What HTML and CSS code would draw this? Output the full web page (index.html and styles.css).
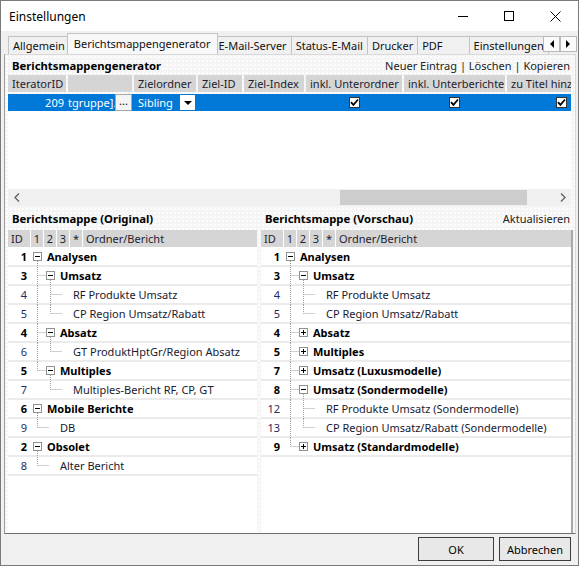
FILE: index.html
```html
<!DOCTYPE html>
<html lang="de">
  <head>
    <meta charset="UTF-8" />
    <title>Einstellungen</title>
    <link rel="stylesheet" href="styles.css">
  </head>
  <body>
    <div class="window">
      <div class="titlebar">
        <span class="title">Einstellungen</span>
        <div class="controls">
          <div class="ctl">
            <svg width="10" height="10"><path d="M0 5.5H10" stroke="#000" /></svg>
          </div>
          <div class="ctl">
            <svg width="10" height="10"><rect x="0.5" y="0.5" width="9" height="9" fill="none" stroke="#000" /></svg>
          </div>
          <div class="ctl">
            <svg width="11" height="11"><path d="M0.5 0.5L10.5 10.5M10.5 0.5L0.5 10.5" stroke="#000" /></svg>
          </div>
        </div>
      </div>

      <div class="tabs">
        <div class="tab">Allgemein</div>
        <div class="tab active">Berichtsmappengenerator</div>
        <div class="tab">E-Mail-Server</div>
        <div class="tab">Status-E-Mail</div>
        <div class="tab">Drucker</div>
        <div class="tab tab-pdf">PDF</div>
        <div class="tab">Einstellungen</div>
        <!-- tab scroll buttons sit over the last tab -->
        <div class="tab-scroll">
          <div class="tab-arrow">
            <svg width="5" height="8"><path d="M5 0V8L1 4Z" fill="#000" /></svg>
          </div>
          <div class="tab-arrow">
            <svg width="5" height="8"><path d="M0 0V8L4 4Z" fill="#000" /></svg>
          </div>
        </div>
      </div>

      <div class="panel">
        <div class="section-head">
          <b>Berichtsmappengenerator</b>
          <span class="links">Neuer Eintrag | Löschen | Kopieren</span>
        </div>

        <div class="grid">
          <div class="grid-head">
            <div class="cell c-iter">IteratorID</div>
            <div class="cell c-path"></div>
            <div class="cell c-ziel">Zielordner</div>
            <div class="cell c-zid">Ziel-ID</div>
            <div class="cell c-zidx">Ziel-Index</div>
            <div class="cell c-uo">inkl. Unterordner</div>
            <div class="cell c-ub">inkl. Unterberichte</div>
            <div class="cell c-tit">zu Titel hinzufügen</div>
          </div>
          <div class="grid-row">
            <div class="cell c-iter num">209</div>
            <div class="cell c-path">
              <span class="clip">tgruppe].8</span>
              <span class="dots">...</span>
            </div>
            <div class="cell c-ziel">
              <span class="clip pad">Sibling</span>
              <span class="drop">
                <svg width="8" height="4"><path d="M0 0H8L4 4Z" fill="#000" /></svg>
              </span>
            </div>
            <div class="cell c-zid"></div>
            <div class="cell c-zidx"></div>
            <div class="cell c-uo center"><span class="check"></span></div>
            <div class="cell c-ub center"><span class="check"></span></div>
            <div class="cell c-tit center"><span class="check"></span></div>
          </div>
          <div class="grid-blank"></div>
          <div class="hscroll">
            <div class="sbtn">
              <svg width="6" height="9"><path d="M5 0.5L1 4.5L5 8.5" fill="none" stroke="#606060" stroke-width="1.3" /></svg>
            </div>
            <div class="track"><div class="thumb"></div></div>
            <div class="sbtn">
              <svg width="6" height="9"><path d="M1 0.5L5 4.5L1 8.5" fill="none" stroke="#606060" stroke-width="1.3" /></svg>
            </div>
          </div>
        </div>

        <div class="panes">
          <div class="pane pane-left">
            <div class="pane-head"><b>Berichtsmappe (Original)</b></div>
            <div class="tree" id="tree-original">
              <div class="tree-head">
                <div class="cell h-id">ID</div>
                <div class="cell h-n">1</div>
                <div class="cell h-n">2</div>
                <div class="cell h-n">3</div>
                <div class="cell h-n">*</div>
                <div class="cell h-name">Ordner/Bericht</div>
              </div>
            </div>
          </div>
          <div class="pane pane-right">
            <div class="pane-head">
              <b>Berichtsmappe (Vorschau)</b>
              <span class="links">Aktualisieren</span>
            </div>
            <div class="tree tree-bordered" id="tree-preview">
              <div class="tree-head">
                <div class="cell h-id">ID</div>
                <div class="cell h-n">1</div>
                <div class="cell h-n">2</div>
                <div class="cell h-n">3</div>
                <div class="cell h-n">*</div>
                <div class="cell h-name">Ordner/Bericht</div>
              </div>
            </div>
          </div>
        </div>
      </div>

      <div class="footer">
        <button class="btn btn-ok">OK</button>
        <button class="btn btn-cancel">Abbrechen</button>
      </div>
    </div>

    <script>
      // [id, level, kind, text]  kind: o = open folder, c = closed folder, r = report
      const original = [
        [1, 0, 'o', 'Analysen'],
        [3, 1, 'o', 'Umsatz'],
        [4, 2, 'r', 'RF Produkte Umsatz'],
        [5, 2, 'r', 'CP Region Umsatz/Rabatt'],
        [4, 1, 'o', 'Absatz'],
        [6, 2, 'r', 'GT ProduktHptGr/Region Absatz'],
        [5, 1, 'o', 'Multiples'],
        [7, 2, 'r', 'Multiples-Bericht RF, CP, GT'],
        [6, 0, 'o', 'Mobile Berichte'],
        [9, 1, 'r', 'DB'],
        [2, 0, 'o', 'Obsolet'],
        [8, 1, 'r', 'Alter Bericht'],
      ];

      const preview = [
        [1, 0, 'o', 'Analysen'],
        [3, 1, 'o', 'Umsatz'],
        [4, 2, 'r', 'RF Produkte Umsatz'],
        [5, 2, 'r', 'CP Region Umsatz/Rabatt'],
        [4, 1, 'c', 'Absatz'],
        [5, 1, 'c', 'Multiples'],
        [7, 1, 'c', 'Umsatz (Luxusmodelle)'],
        [8, 1, 'o', 'Umsatz (Sondermodelle)'],
        [12, 2, 'r', 'RF Produkte Umsatz (Sondermodelle)'],
        [13, 2, 'r', 'CP Region Umsatz/Rabatt (Sondermodelle)'],
        [9, 1, 'c', 'Umsatz (Standardmodelle)'],
      ];

      // does the item at index i have a later sibling?
      function hasNext(rows, i) {
        const level = rows[i][1];
        for (let j = i + 1; j < rows.length; j++) {
          if (rows[j][1] < level) return false;
          if (rows[j][1] === level) return true;
        }
        return false;
      }

      function ancestorIndex(rows, i, level) {
        for (let j = i - 1; j >= 0; j--) {
          if (rows[j][1] === level) return j;
        }
        return -1;
      }

      const cx = (k) => 7.5 + 13 * k;

      function gutter(rows, i) {
        const [, level, kind] = rows[i];
        const w = 13 * (level + 1) + 4;
        let dotted = '';
        let solid = '';

        for (let k = 1; k < level; k++) {
          if (hasNext(rows, ancestorIndex(rows, i, k))) {
            dotted += `M${cx(k - 1)} 0V19`;
          }
        }
        if (level > 0) {
          dotted += `M${cx(level - 1)} 0V${hasNext(rows, i) ? 19 : 8.5}`;
          const end = kind === 'r' ? cx(level) - 1 : cx(level) - 4;
          dotted += `M${cx(level - 1)} 8.5H${end}`;
        }
        if (kind === 'o' && rows[i + 1] && rows[i + 1][1] > level) {
          dotted += `M${cx(level)} 13V19`;
        }
        if (kind !== 'r') {
          const c = cx(level);
          solid += `<rect x="${c - 4}" y="4.5" width="8" height="8" fill="#fff" stroke="#919191" />`;
          let sign = `M${c - 2.5} 8.5H${c + 2.5}`;
          if (kind === 'c') sign += `M${c} 6V11`;
          solid += `<path d="${sign}" stroke="#000" />`;
        }

        return `<svg width="${w}" height="19"><path d="${dotted}" fill="none" stroke="#a0a0a0" stroke-dasharray="1 1" />${solid}</svg>`;
      }

      function renderTree(el, rows) {
        rows.forEach((row, i) => {
          const div = document.createElement('div');
          div.className = 'tree-row' + (row[2] === 'r' ? ' report' : ' folder');
          div.innerHTML =
            `<span class="tid">${row[0]}</span>` +
            gutter(rows, i) +
            `<span class="tlabel">${row[3]}</span>`;
          el.appendChild(div);
        });
      }

      renderTree(document.getElementById('tree-original'), original);
      renderTree(document.getElementById('tree-preview'), preview);
    </script>
  </body>
</html>
```

FILE: styles.css
```css
* {
  margin: 0;
  padding: 0;
  box-sizing: border-box;
}

body {
  font-family: 'Noto Sans', 'Liberation Sans', sans-serif;
  font-size: 11px;
  color: #111;
  background: #fff;
  width: 579px;
  height: 566px;
  overflow: hidden;
}

.window {
  width: 579px;
  height: 566px;
  border: 1px solid #7a7a7a;
  background: #f0f0f0;
  display: flex;
  flex-direction: column;
}

/* title bar */

.titlebar {
  height: 30px;
  flex: none;
  background: #fff;
  display: flex;
  align-items: center;
  padding-left: 8px;
}

.title {
  flex: 1;
  font-size: 12px;
  color: #000;
}

.controls {
  display: flex;
}

.ctl {
  width: 46px;
  height: 30px;
  display: flex;
  align-items: center;
  justify-content: center;
}

.ctl svg {
  display: block;
}

/* tabs */

.tabs {
  height: 23px;
  flex: none;
  display: flex;
  align-items: flex-end;
  padding-left: 8px;
  position: relative;
  overflow: hidden;
}

.tab {
  height: 18px;
  line-height: 17px;
  padding: 0 4px;
  border: 1px solid #c3c3c3;
  border-bottom: none;
  margin-left: -1px;
  background: #f0f0f0;
  white-space: nowrap;
  flex: none;
}

.tab.active {
  height: 22px;
  line-height: 20px;
  padding: 0 6px;
  margin: 0 -3px -1px -3px;
  background: #f8f8f8;
  position: relative;
  z-index: 1;
}

.tab-pdf {
  padding-right: 26px;
}

.tab-scroll {
  position: absolute;
  right: 1px;
  top: 5px;
  display: flex;
  z-index: 2;
}

.tab-arrow {
  width: 17px;
  height: 16px;
  border: 1px solid #b8b8b8;
  background: #fafafa;
  display: flex;
  align-items: center;
  justify-content: center;
}

.tab-arrow svg {
  display: block;
}

/* panel */

.panel {
  flex: 1;
  margin: 0 2px 0 3px;
  border: 1px solid #d9d9d9;
  border-left-color: #9a9a9a;
  border-bottom-color: #6e6e6e;
  padding: 0 2px 0 3px;
  background-color: #f5f5f5;
  background-image: radial-gradient(circle, #fdfdfd 0.7px, transparent 0.9px);
  background-size: 4px 4px;
  display: flex;
  flex-direction: column;
}

.section-head {
  height: 20px;
  flex: none;
  display: flex;
  align-items: center;
  justify-content: space-between;
  padding: 0 3px 0 4px;
  white-space: nowrap;
}

.section-head b,
.pane-head b {
  font-weight: 700;
  font-size: 11.3px;
  color: #000;
}

.links {
  color: #222;
}

/* grid */

.grid {
  width: 563px;
  flex: none;
  display: flex;
  flex-direction: column;
}

.grid-head,
.grid-row {
  height: 17px;
  display: flex;
  gap: 2px;
  overflow: hidden;
  line-height: 17px;
  white-space: nowrap;
}

.grid-head .cell {
  background: #d5d5d5;
  padding-left: 4px;
  color: #1d1d2e;
}

.grid-row {
  margin-top: 2px;
  background: #0078d7;
  color: #fff;
}

.cell {
  flex: none;
  overflow: hidden;
}

.grid-row .cell {
  display: flex;
  align-items: center;
}

.c-iter { width: 58px; }
.c-path { width: 64px; }
.c-ziel { width: 62px; }
.c-zid { width: 44px; }
.c-zidx { width: 60px; }
.c-uo { width: 96px; }
.c-ub { width: 101px; }
.c-tit { width: 108px; }

.num {
  justify-content: flex-end;
  padding-right: 2px;
}

.center {
  justify-content: center;
}

.clip {
  flex: 1;
  overflow: hidden;
  white-space: nowrap;
}

.pad {
  padding-left: 4px;
}

.dots {
  width: 17px;
  height: 17px;
  flex: none;
  background: #f4f4f4;
  border: 1px solid #a8a8a8;
  color: #111;
  text-align: center;
  line-height: 12px;
}

.drop {
  width: 15px;
  height: 15px;
  flex: none;
  margin-right: 1px;
  background: #fff;
  display: flex;
  align-items: center;
  justify-content: center;
}

.drop svg {
  display: block;
}

.check {
  width: 11px;
  height: 11px;
  border: 1px solid #333;
  background: #fff url("data:image/svg+xml,%3Csvg xmlns='http://www.w3.org/2000/svg' width='9' height='9'%3E%3Cpath d='M1 4.2L3.4 6.8L8 1.5' fill='none' stroke='%23000' stroke-width='1.8'/%3E%3C/svg%3E") no-repeat center;
}

.grid-blank {
  height: 78px;
  background: #fff;
}

.hscroll {
  height: 17px;
  background: #f0f0f0;
  display: flex;
  align-items: center;
}

.sbtn {
  width: 17px;
  height: 17px;
  display: flex;
  align-items: center;
  justify-content: center;
}

.sbtn svg {
  display: block;
}

.track {
  flex: 1;
  height: 17px;
  display: flex;
  align-items: center;
}

.thumb {
  margin-left: 315px;
  width: 187px;
  height: 15px;
  background: #cdcdcd;
}

/* trees */

.panes {
  flex: 1;
  display: flex;
  gap: 4px;
  min-height: 0;
}

.pane {
  display: flex;
  flex-direction: column;
}

.pane-left {
  width: 249px;
}

.pane-right {
  flex: 1;
}

.pane-head {
  height: 24px;
  flex: none;
  display: flex;
  align-items: center;
  justify-content: space-between;
  padding: 0 3px 0 4px;
  white-space: nowrap;
}

.tree {
  flex: 1;
  background: #fff;
  display: flex;
  flex-direction: column;
  overflow: hidden;
}

.tree-bordered {
  border-right: 2px solid #a9a9a9;
}

.tree-head {
  height: 18px;
  flex: none;
  display: flex;
  gap: 1px;
  padding-bottom: 1px;
  line-height: 17px;
}

.tree-head .cell {
  background: #d5d5d5;
  color: #1d1d2e;
}

.h-id {
  width: 22px;
  padding-left: 3px;
}

.h-n {
  width: 12px;
  text-align: center;
}

.h-name {
  flex: 1;
  padding-left: 3px;
}

.tree-row {
  height: 19px;
  flex: none;
  display: flex;
  align-items: flex-start;
  background: linear-gradient(#fff 17px, #ebebeb 17px);
  white-space: nowrap;
}

.tree-row svg {
  flex: none;
  display: block;
}

.tid {
  width: 22px;
  flex: none;
  text-align: right;
  padding-right: 3px;
  line-height: 17px;
}

.tlabel {
  line-height: 17px;
}

.folder .tid,
.folder .tlabel {
  font-weight: 700;
  color: #000;
}

.report .tid {
  color: #1f2d62;
}

.report .tlabel {
  color: #1a1a30;
}

/* footer */

.footer {
  height: 31px;
  flex: none;
  display: flex;
  justify-content: flex-end;
  gap: 5px;
  padding: 3px 7px 0 0;
}

.btn {
  height: 24px;
  font-family: inherit;
  font-size: 11px;
  color: #000;
  background: #e8e8e8;
  border: 1px solid #3c3c3c;
}

.btn-ok {
  width: 76px;
}

.btn-cancel {
  width: 72px;
}
```
